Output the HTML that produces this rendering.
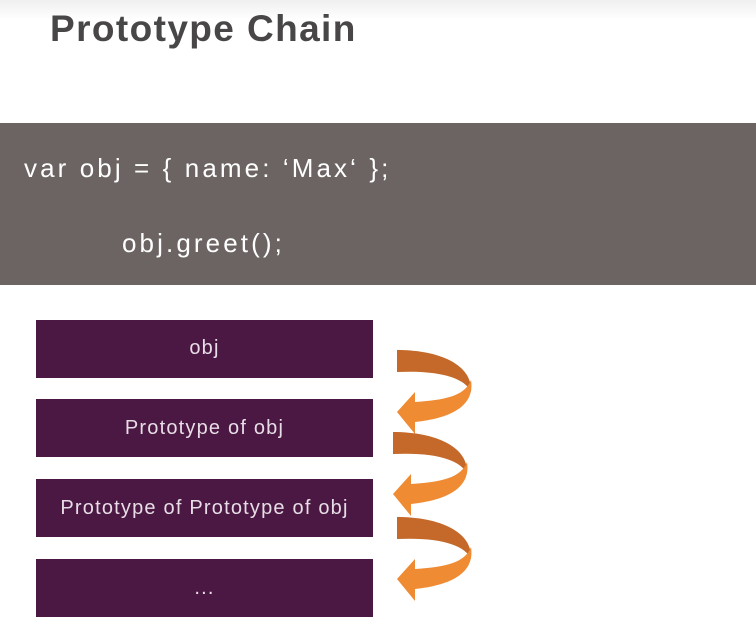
<!DOCTYPE html>
<html><head><style>
body{margin:0;width:756px;height:629px;background:#fff;position:relative;overflow:hidden;font-family:"Liberation Sans",sans-serif}
.top{position:absolute;left:0;top:0;width:756px;height:20px;background:linear-gradient(#efefef,#fff)}
h1{position:absolute;left:50px;top:8px;margin:0;font-size:37px;font-weight:bold;color:#484646;letter-spacing:1.4px}
.band{position:absolute;left:0;top:123px;width:756px;height:162px;background:#6b6463}
.code{position:absolute;color:#fff;font-size:26px;letter-spacing:3.1px;white-space:pre}
.box{position:absolute;left:36px;width:337px;height:58px;background:#4a1842;color:#e8dde6;font-size:20px;letter-spacing:1.2px;text-align:center;line-height:58px}
svg{position:absolute;left:0;top:0}
</style></head><body>
<div class="top"></div>
<h1>Prototype Chain</h1>
<div class="band"></div>
<div class="code" style="left:24px;top:153px">var obj = { name: ‘Max‘ };</div>
<div class="code" style="left:122px;top:228px">obj.greet();</div>
<div class="box" style="top:320px;line-height:56px">obj</div>
<div class="box" style="top:399px">Prototype of obj</div>
<div class="box" style="top:479px">Prototype of Prototype of obj</div>
<div class="box" style="top:559px">...</div>
<svg width="756" height="629">
<defs><g id="ar">
<path d="M2,0 C45,0 78,15 76,42 C70,28 45,20 2,22 Z" fill="#c4692a"/>
<path d="M76,30 C80,55 58,68 20,72 L20,84 L2,62 L20,42 L20,52 C50,50 70,46 76,30 Z" fill="#ef8b33"/>
</g></defs>
<use href="#ar" x="395" y="350"/>
<use href="#ar" x="391" y="432"/>
<use href="#ar" x="395" y="517"/>
</svg>
</body></html>
